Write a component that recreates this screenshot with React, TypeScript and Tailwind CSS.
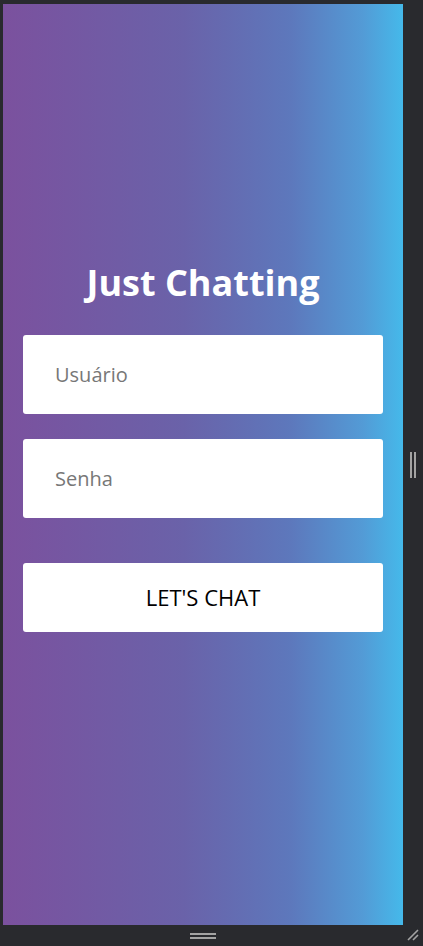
export default function App() {
  return (
    <div className="flex h-[946px] w-[423px] flex-col bg-[#292a2e]">
      <div className="flex flex-1 pl-[3px] pt-[4px]">
        <main
          className="flex w-[400px] flex-col items-center px-5 pt-[255px]"
          style={{
            background:
              "linear-gradient(to right, #7b519e, #6a62a9 45%, #5d78bc 72%, #539bd6 90%, #45b9ea)",
          }}
        >
          <h1 className="mb-[28px] text-[36px] font-bold leading-[48px] text-white [font-family:'Open_Sans',sans-serif]">
            Just Chatting
          </h1>
          <input
            placeholder="Usuário"
            className="mb-[25px] h-[79px] w-full rounded-[3px] bg-white px-8 text-[20px] text-[#222] outline-none placeholder:text-[#777] [font-family:'Open_Sans',sans-serif]"
          />
          <input
            placeholder="Senha"
            type="password"
            className="mb-[45px] h-[79px] w-full rounded-[3px] bg-white px-8 text-[20px] text-[#222] outline-none placeholder:text-[#777] [font-family:'Open_Sans',sans-serif]"
          />
          <button className="h-[69px] w-full rounded-[3px] bg-white text-[22px] text-black [font-family:'Open_Sans',sans-serif]">
            LET'S CHAT
          </button>
        </main>
        <div className="flex w-[20px] items-center justify-center gap-[2px]">
          <div className="h-[26px] w-[2px] bg-[#a3a3a3]" />
          <div className="h-[26px] w-[2px] bg-[#a3a3a3]" />
        </div>
      </div>
      <div className="relative flex h-[21px] items-center pl-[190px]">
        <div className="flex flex-col gap-[2px]">
          <div className="h-[2px] w-[26px] bg-[#a3a3a3]" />
          <div className="h-[2px] w-[26px] bg-[#a3a3a3]" />
        </div>
        <svg className="absolute right-[3px] top-[3px]" width="14" height="14" viewBox="0 0 14 14">
          <path d="M2 12 L12 2 M7 12 L12 7" stroke="#a3a3a3" strokeWidth="1.6" />
        </svg>
      </div>
    </div>
  );
}
